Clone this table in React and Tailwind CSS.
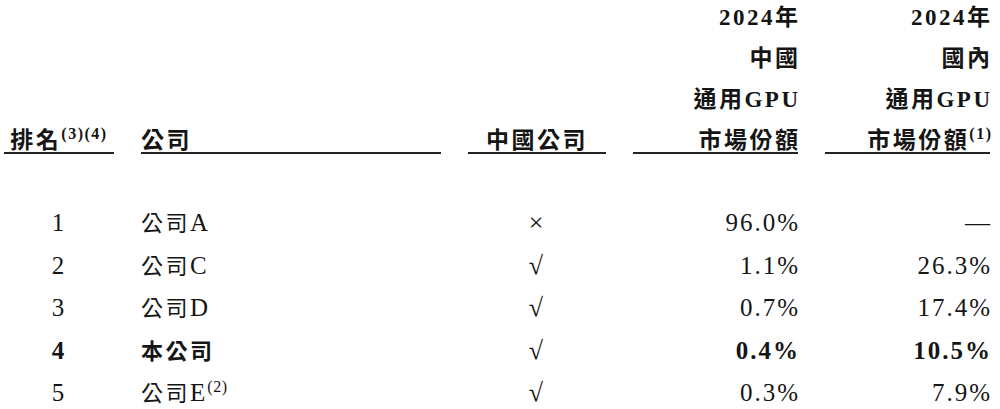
const FONT = { fontFamily: '"Liberation Serif", "Noto Sans CJK TC", serif' }

const ROWS = [
  { rank: '1', cjk: '公司', latin: 'A', cn: '×', share: '96.0%', domestic: '—' },
  { rank: '2', cjk: '公司', latin: 'C', cn: '√', share: '1.1%', domestic: '26.3%' },
  { rank: '3', cjk: '公司', latin: 'D', cn: '√', share: '0.7%', domestic: '17.4%' },
  { rank: '4', cjk: '本公司', cn: '√', share: '0.4%', domestic: '10.5%', bold: true },
  { rank: '5', cjk: '公司', latin: 'E', sup: '(2)', cn: '√', share: '0.3%', domestic: '7.9%' },
]

const COLS = 'grid grid-cols-[110px_300px_138px_165px_165px] gap-x-[27px] pl-[4px]'

function HeadCell({ lines, align = 'text-right', sup }) {
  return (
    <div className="border-b-2 border-[#222]">
      <div className={`-mb-[9px] leading-[41px] font-bold tracking-[2.5px] ${align}`}>
        {lines.map((l, i) => (
          <div key={i}>
            <span className={align === 'text-right' ? '-mr-[2.5px]' : ''}>
              {l}
              {i === lines.length - 1 && sup && (
                <sup className="text-[16px] tracking-[1.5px] -top-[9px]">{sup}</sup>
              )}
            </span>
          </div>
        ))}
      </div>
    </div>
  )
}

export default function App() {
  return (
    <div className="w-[1000px] h-[409px] overflow-hidden bg-white text-[#151515] text-[23px]" style={FONT}>
      {/* Header */}
      <div className={`${COLS} items-end -mt-[3px]`}>
        <HeadCell lines={['排名']} sup="(3)(4)" align="text-center" />
        <HeadCell lines={['公司']} align="text-left" />
        <HeadCell lines={['中國公司']} align="text-center" />
        <HeadCell lines={['2024年', '中國', '通用GPU', '市場份額']} />
        <HeadCell lines={['2024年', '國內', '通用GPU', '市場份額']} sup="(1)" />
      </div>

      {/* Rows */}
      <div className="mt-[48px]">
        {ROWS.map(r => (
          <div key={r.rank} className={`${COLS} leading-[41.5px] text-[25px] tracking-[2px] ${r.bold ? 'font-bold' : ''}`}>
            <div className="text-center">{r.rank}</div>
            <div>
              <span className="text-[22px] tracking-[2.5px]">{r.cjk}</span>
              {r.latin}
              {r.sup && <sup className="text-[16px] tracking-[0.5px] -top-[9px]">{r.sup}</sup>}
            </div>
            <div className="text-center font-normal text-[26px]">{r.cn}</div>
            <div className="text-right"><span className="-mr-[2px]">{r.share}</span></div>
            <div className="text-right"><span className="-mr-[2px]">{r.domestic}</span></div>
          </div>
        ))}
      </div>
    </div>
  )
}
